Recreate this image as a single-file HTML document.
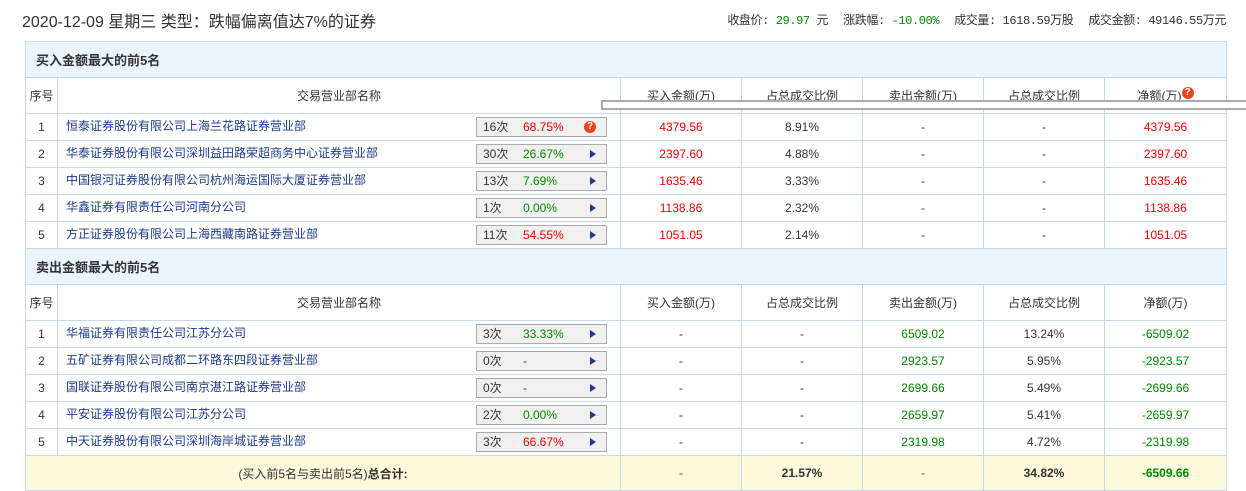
<!DOCTYPE html>
<html><head><meta charset="utf-8"><style>
*{margin:0;padding:0;box-sizing:border-box}
body{width:1246px;height:491px;background:#fff;font-family:"Liberation Sans","Noto Sans CJK SC",sans-serif;font-size:12px;color:#333;position:relative;overflow:hidden}
.t{position:absolute;left:22px;top:8px;font-size:16px;color:#333}
.info{position:absolute;top:11px;right:20px;font-size:12px;color:#333;font-family:"Liberation Mono","Noto Sans CJK SC",monospace;letter-spacing:-0.4px}
.info span{margin-left:15px}
.g{color:#080}
table{position:absolute;left:25px;top:41px;border-collapse:collapse;width:1201px;table-layout:fixed}
td{border:1px solid #c6d9eb;text-align:center;height:27px;padding:0;white-space:nowrap;overflow:hidden}
tr.sec td{background:#eaf4fd;height:36px;text-align:left;padding-left:10px;font-weight:bold;font-size:13px}
tr.hd td{height:36px}
td.n{text-align:left;padding-left:8px;color:#1d3a8a;position:relative}
td.n span.tx{position:relative;top:-2px}
.b{position:absolute;left:418px;top:3px;width:131px;height:20px;border:1px solid #aaa;background:#f0f0f0;text-align:left;padding-left:6px;line-height:18px;color:#333}
.b i{font-style:normal;position:absolute;left:46px}
.b em{position:absolute;right:10px;top:5px;width:0;height:0;border-left:6px solid #1d3a8a;border-top:4px solid transparent;border-bottom:4px solid transparent}
.q{position:absolute;right:10px;top:3px;width:12px;height:12px;border-radius:50%;background:#e8451c;color:#fff;font-size:10px;font-weight:bold;line-height:12px;text-align:center}
.r{color:#e00}.gr{color:#080}
tr.tot td{background:#fdf9dd;height:35px;font-weight:bold}
.line{position:absolute;left:601px;top:100px;width:660px;height:10px;border:2px solid #aaa;background:#fff;z-index:2}
</style></head><body>
<div class="t">2020-12-09 星期三 类型：跌幅偏离值达7%的证券</div>
<div class="info">收盘价: <b class="g" style="font-weight:normal">29.97</b> 元<span>涨跌幅: <b class="g" style="font-weight:normal">-10.00%</b></span><span>成交量: 1618.59万股</span><span>成交金额: 49146.55万元</span></div>
<div class="line"></div>
<table>
<colgroup><col style="width:32px"><col style="width:563px"><col style="width:121px"><col style="width:121px"><col style="width:121px"><col style="width:121px"><col style="width:122px"></colgroup>
<tr class="sec"><td colspan="7">买入金额最大的前5名</td></tr>
<tr class="hd"><td>序号</td><td>交易营业部名称</td><td>买入金额(万)</td><td>占总成交比例</td><td>卖出金额(万)</td><td>占总成交比例</td><td>净额(万)<span style="display:inline-block;width:12px;height:12px;border-radius:50%;background:#e8451c;color:#fff;font-size:10px;font-weight:bold;line-height:12px;vertical-align:top">?</span></td></tr>
<tr><td>1</td><td class="n"><span class="tx">恒泰证券股份有限公司上海兰花路证券营业部</span><div class="b">16次<i class="r">68.75%</i><span class="q">?</span></div></td><td class="r">4379.56</td><td>8.91%</td><td>-</td><td>-</td><td class="r">4379.56</td></tr>
<tr><td>2</td><td class="n"><span class="tx">华泰证券股份有限公司深圳益田路荣超商务中心证券营业部</span><div class="b">30次<i class="gr">26.67%</i><em></em></div></td><td class="r">2397.60</td><td>4.88%</td><td>-</td><td>-</td><td class="r">2397.60</td></tr>
<tr><td>3</td><td class="n"><span class="tx">中国银河证券股份有限公司杭州海运国际大厦证券营业部</span><div class="b">13次<i class="gr">7.69%</i><em></em></div></td><td class="r">1635.46</td><td>3.33%</td><td>-</td><td>-</td><td class="r">1635.46</td></tr>
<tr><td>4</td><td class="n"><span class="tx">华鑫证券有限责任公司河南分公司</span><div class="b">1次<i class="gr">0.00%</i><em></em></div></td><td class="r">1138.86</td><td>2.32%</td><td>-</td><td>-</td><td class="r">1138.86</td></tr>
<tr><td>5</td><td class="n"><span class="tx">方正证券股份有限公司上海西藏南路证券营业部</span><div class="b">11次<i class="r">54.55%</i><em></em></div></td><td class="r">1051.05</td><td>2.14%</td><td>-</td><td>-</td><td class="r">1051.05</td></tr>
<tr class="sec"><td colspan="7">卖出金额最大的前5名</td></tr>
<tr class="hd"><td>序号</td><td>交易营业部名称</td><td>买入金额(万)</td><td>占总成交比例</td><td>卖出金额(万)</td><td>占总成交比例</td><td>净额(万)</td></tr>
<tr><td>1</td><td class="n"><span class="tx">华福证券有限责任公司江苏分公司</span><div class="b">3次<i class="gr">33.33%</i><em></em></div></td><td>-</td><td>-</td><td class="gr">6509.02</td><td>13.24%</td><td class="gr">-6509.02</td></tr>
<tr><td>2</td><td class="n"><span class="tx">五矿证券有限公司成都二环路东四段证券营业部</span><div class="b">0次<i>-</i><em></em></div></td><td>-</td><td>-</td><td class="gr">2923.57</td><td>5.95%</td><td class="gr">-2923.57</td></tr>
<tr><td>3</td><td class="n"><span class="tx">国联证券股份有限公司南京湛江路证券营业部</span><div class="b">0次<i>-</i><em></em></div></td><td>-</td><td>-</td><td class="gr">2699.66</td><td>5.49%</td><td class="gr">-2699.66</td></tr>
<tr><td>4</td><td class="n"><span class="tx">平安证券股份有限公司江苏分公司</span><div class="b">2次<i class="gr">0.00%</i><em></em></div></td><td>-</td><td>-</td><td class="gr">2659.97</td><td>5.41%</td><td class="gr">-2659.97</td></tr>
<tr><td>5</td><td class="n"><span class="tx">中天证券股份有限公司深圳海岸城证券营业部</span><div class="b">3次<i class="r">66.67%</i><em></em></div></td><td>-</td><td>-</td><td class="gr">2319.98</td><td>4.72%</td><td class="gr">-2319.98</td></tr>
<tr class="tot"><td colspan="2" style="font-weight:normal">(买入前5名与卖出前5名)<b>总合计:</b></td><td class="r" style="font-weight:normal">-</td><td>21.57%</td><td class="gr" style="font-weight:normal">-</td><td>34.82%</td><td class="gr">-6509.66</td></tr>
</table>
</body></html>
